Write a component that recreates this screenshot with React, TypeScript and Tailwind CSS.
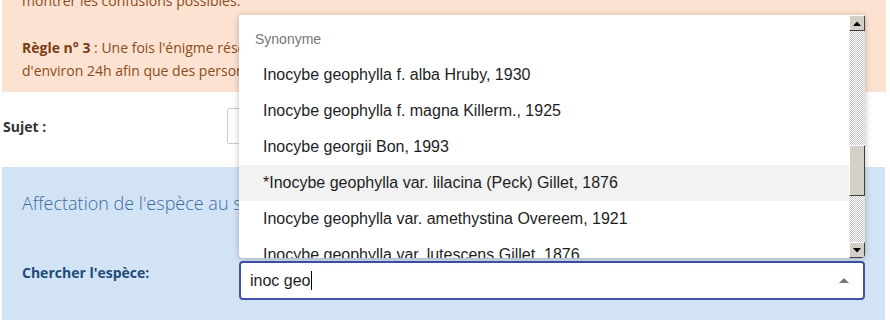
import React from 'react';

const ITEMS = [
  'Inocybe geophylla f. alba Hruby, 1930',
  'Inocybe geophylla f. magna Killerm., 1925',
  'Inocybe georgii Bon, 1993',
  '*Inocybe geophylla var. lilacina (Peck) Gillet, 1876',
  'Inocybe geophylla var. amethystina Overeem, 1921',
  'Inocybe geophylla var. lutescens Gillet, 1876',
  'Inocybe geophylla var. violacea Pat., 1887',
];

function ScrollButton({ dir }: { dir: 'up' | 'down' }) {
  return (
    <div className="w-[16px] h-[16px] bg-[#d4d0c8] border-t border-l border-t-white border-l-white border-b border-r border-b-[#404040] border-r-[#404040] flex items-center justify-center">
      <svg width="8" height="5" viewBox="0 0 8 5">
        {dir === 'up' ? <path d="M0 5 L4 0.5 L8 5 Z" fill="#000" /> : <path d="M0 0 L4 4.5 L8 0 Z" fill="#000" />}
      </svg>
    </div>
  );
}

function Dropdown() {
  return (
    <div className="absolute left-0 bottom-full mb-[3px] w-[626px] h-[243px] bg-white rounded-t-[2px] rounded-b-[4px] shadow-[0_1px_6px_rgba(0,0,0,0.25)] overflow-hidden flex">
      <div className="flex-1 overflow-hidden font-['Liberation_Sans',Arial,sans-serif]">
        <div className="h-[42px] pt-[14px] pl-[16px] text-[14px] leading-[20px] text-[#777]">Synonyme</div>
        {ITEMS.map((item, i) => (
          <div
            key={item}
            className={`h-[36px] flex items-center pl-[24px] text-[16px] text-[#1e1e1e] whitespace-nowrap ${i === 3 ? 'bg-[#f2f2f2]' : ''}`}
          >
            {item}
          </div>
        ))}
      </div>
      {/* old style scrollbar */}
      <div className="w-[16px] flex flex-col bg-[repeating-conic-gradient(#c6c6c6_0_25%,#ffffff_0_50%)] bg-[length:2px_2px]">
        <ScrollButton dir="up" />
        <div className="flex-1 pt-[114px]">
          <div className="h-[51px] bg-[#d4d0c8] border-t border-l border-t-white border-l-white border-b border-r border-b-[#404040] border-r-[#404040]" />
        </div>
        <ScrollButton dir="down" />
      </div>
    </div>
  );
}

export default function App() {
  return (
    <div className="w-[890px] h-[320px] overflow-hidden relative bg-white font-['Open_Sans',sans-serif]">
      {/* rules box */}
      <div className="mx-[2px] w-[884px] -mt-[34px] pt-[23px] pb-[10px] px-5 bg-[#fde2d2] text-[14px] leading-[23px] text-[#8a4b20] whitespace-nowrap">
        <p>montrer les confusions possibles.</p>
        <p className="mt-[24px]">
          <span className="font-bold text-[#7a3c12]">Règle n° 3</span> : Une fois l'énigme résolue, merci de patienter avant de publier la réponse
          <br />
          d'environ 24h afin que des personnes moins expérimentées puissent participer.
        </p>
      </div>

      {/* sujet */}
      <div className="h-[75px] flex items-start">
        <div className="w-[227px] pl-[3px] pt-[25px] text-[14px] leading-[20px] font-bold text-[#333]">Sujet :</div>
        <div className="mt-[16px] w-[600px] h-[36px] border border-[#ccc] rounded-[2px]" />
      </div>

      {/* affectation */}
      <div className="mx-[2px] w-[883px] h-[160px] bg-[#d3e3f6] px-5 pt-[23px]">
        <h2 className="text-[18px] leading-[26px] font-light text-[#3b6c9c] whitespace-nowrap">Affectation de l'espèce au sujet</h2>
        <div className="mt-[45px] flex items-start">
          <div className="w-[217px] pt-[2px] text-[14px] leading-[20px] font-bold text-[#1f4a78]">Chercher l'espèce:</div>
          <div className="relative">
            <div className="w-[626px] h-[39px] border-2 border-[#3f51a8] rounded-[4px] bg-white flex items-center pl-[9px] pr-[12px] font-['Liberation_Sans',Arial,sans-serif] text-[16px] text-[#1e1e1e]">
              <span>inoc geo</span>
              <span className="w-px h-[19px] bg-black" />
              <span className="flex-1" />
              <svg width="10" height="5" viewBox="0 0 10 5" className="mr-[2px]">
                <path d="M0 5 L5 0 L10 5 Z" fill="#777" />
              </svg>
            </div>
            <Dropdown />
          </div>
        </div>
      </div>
    </div>
  );
}
